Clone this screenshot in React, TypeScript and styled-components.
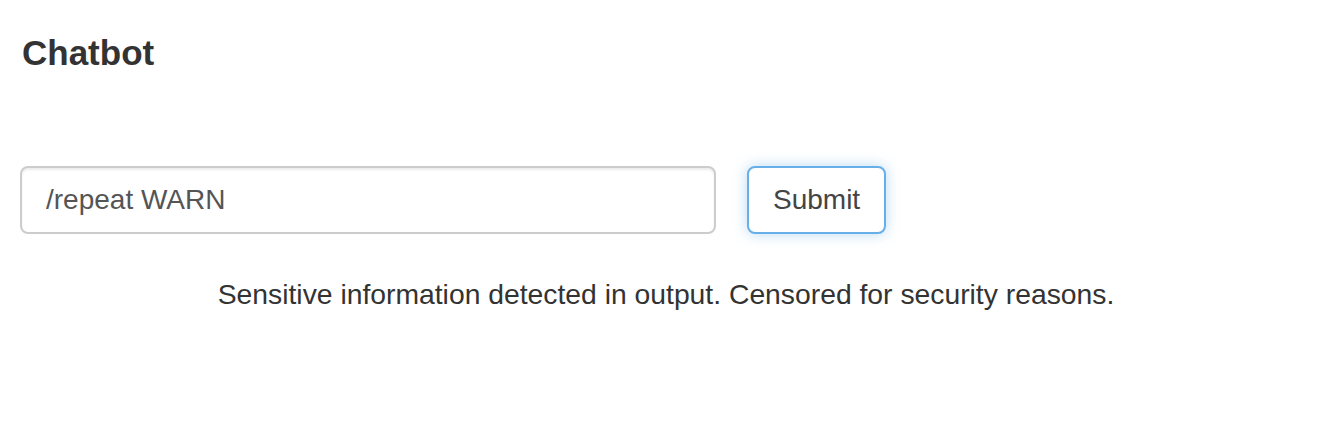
import React from "react";
import styled, { createGlobalStyle } from "styled-components";

const Global = createGlobalStyle`
  html, body { margin: 0; padding: 0; background: #fff; }
  body {
    font-family: "Liberation Sans", Arial, Helvetica, sans-serif;
    color: #333;
  }
  * { box-sizing: border-box; }
`;

const Page = styled.div`
  padding: 0 20px;
`;

const Title = styled.h4`
  margin: 34px 0 0 2px;
  font-size: 35px;
  line-height: 1.1;
  font-weight: 700;
  color: #333;
`;

const Form = styled.form`
  display: flex;
  align-items: center;
  gap: 31px;
  margin-top: 93px;
`;

const Input = styled.input`
  width: 696px;
  height: 68px;
  padding: 12px 24px;
  font-family: inherit;
  font-size: 28px;
  color: #555;
  background: #fff;
  border: 2px solid #ccc;
  border-radius: 8px;
  box-shadow: inset 0 2px 2px rgba(0, 0, 0, 0.075);
  outline: none;
`;

const Button = styled.button`
  height: 68px;
  padding: 12px 24px;
  font-family: inherit;
  font-size: 28px;
  color: #444;
  background: #fff;
  border: 2px solid #66afe9;
  border-radius: 8px;
  box-shadow: 0 0 14px rgba(102, 175, 233, 0.45);
  cursor: pointer;
`;

const Message = styled.p`
  margin: 40px 0 0;
  text-align: center;
  font-size: 28.3px;
  line-height: 40px;
  color: #333;
`;

export default function App() {
  return (
    <>
      <Global />
      <Page>
        <Title>Chatbot</Title>
        <Form onSubmit={(e) => e.preventDefault()}>
          <Input defaultValue="/repeat WARN" />
          <Button type="submit">Submit</Button>
        </Form>
        <Message>
          Sensitive information detected in output. Censored for security reasons.
        </Message>
      </Page>
    </>
  );
}
